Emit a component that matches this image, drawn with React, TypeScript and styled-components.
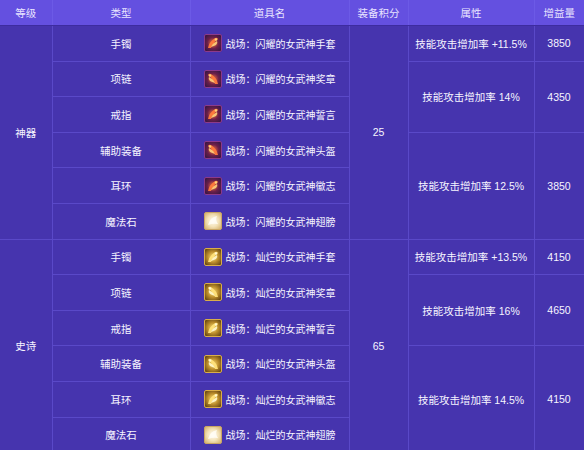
import styled, { createGlobalStyle } from 'styled-components';

const GlobalStyle = createGlobalStyle`
  html, body {
    margin: 0;
    padding: 0;
    background: #4634ae;
  }
  body {
    font-family: 'Liberation Sans', 'Noto Sans CJK SC', sans-serif;
  }
`;

type Tone = 'red' | 'gold';

type Attr = { rows: number; text: string; gain: number };

type Group = {
  grade: string;
  score: number;
  prefix: string;
  tone: Tone;
  attrs: Attr[];
};

const types = ['手镯', '项链', '戒指', '辅助装备', '耳环', '魔法石'];
const suffixes = ['手套', '奖章', '誓言', '头盔', '徽志', '翅膀'];

const groups: Group[] = [
  {
    grade: '神器',
    score: 25,
    prefix: '战场：闪耀的女武神',
    tone: 'red',
    attrs: [
      { rows: 1, text: '技能攻击增加率 +11.5%', gain: 3850 },
      { rows: 2, text: '技能攻击增加率 14%', gain: 4350 },
      { rows: 3, text: '技能攻击增加率 12.5%', gain: 3850 },
    ],
  },
  {
    grade: '史诗',
    score: 65,
    prefix: '战场：灿烂的女武神',
    tone: 'gold',
    attrs: [
      { rows: 1, text: '技能攻击增加率 +13.5%', gain: 4150 },
      { rows: 2, text: '技能攻击增加率 16%', gain: 4650 },
      { rows: 3, text: '技能攻击增加率 14.5%', gain: 4150 },
    ],
  },
];

const palette = {
  red: { frame: '#3a1744', inner: '#6b1f4a', glow: '#ff7a3c', hi: '#ffd27a', rim: '#8c3a8a' },
  gold: { frame: '#6a4a14', inner: '#b88a2a', glow: '#ffe27a', hi: '#fff8d0', rim: '#d9ad4a' },
};

// small item artwork, drawn by hand
function ItemIcon({ tone, index }: { tone: Tone; index: number }) {
  const p = palette[tone];
  const id = `g-${tone}-${index}`;
  const stone = index === 5;
  const flip = index % 2 === 1;
  return (
    <svg width='18' height='18' viewBox='0 0 18 18'>
      <defs>
        <radialGradient id={id} cx='0.5' cy='0.5' r='0.6'>
          <stop offset='0' stopColor={stone ? '#fffaf0' : p.glow} />
          <stop offset='0.55' stopColor={stone ? '#f3e2b8' : p.inner} />
          <stop offset='1' stopColor={stone ? '#d9b978' : p.frame} />
        </radialGradient>
      </defs>
      <rect x='0.5' y='0.5' width='17' height='17' rx='1.5' fill={`url(#${id})`} stroke={stone ? '#c9a564' : p.rim} />
      {stone ? (
        <path d='M4 13 Q6 5 13 4 Q11 8 14 12 Q9 11 4 13 Z' fill='#fffdf6' opacity='0.85' />
      ) : (
        <g transform={flip ? 'translate(18 0) scale(-1 1)' : undefined}>
          <path d='M4 14 Q5 8 11 4 Q13 3 14 5 Q9 8 7 14 Z' fill={p.glow} opacity='0.95' />
          <path d='M7 13 Q9 9 13 7 Q14 9 12 11 Q10 12 7 13 Z' fill={p.hi} opacity='0.9' />
          <circle cx='12' cy='5.5' r='1.3' fill={p.hi} />
        </g>
      )}
    </svg>
  );
}

export default function App() {
  return (
    <>
      <GlobalStyle />
      <Table>
        <colgroup>
          <col style={{ width: 52 }} />
          <col style={{ width: 138 }} />
          <col style={{ width: 159 }} />
          <col style={{ width: 59 }} />
          <col style={{ width: 126 }} />
          <col style={{ width: 50 }} />
        </colgroup>
        <thead>
          <tr>
            <HeadCell>等级</HeadCell>
            <HeadCell>类型</HeadCell>
            <HeadCell>道具名</HeadCell>
            <HeadCell>装备积分</HeadCell>
            <HeadCell>属性</HeadCell>
            <HeadCell>增益量</HeadCell>
          </tr>
        </thead>
        <tbody>
          {groups.map((g) => {
            const starts: Record<number, Attr> = {};
            let r = 0;
            g.attrs.forEach((a) => {
              starts[r] = a;
              r += a.rows;
            });
            return types.map((t, i) => (
              <Row key={g.grade + t}>
                {i === 0 && <Cell rowSpan={6}>{g.grade}</Cell>}
                <Cell>{t}</Cell>
                <Cell>
                  <ItemName>
                    <ItemIcon tone={g.tone} index={i} />
                    <span>
                      {g.prefix}
                      {suffixes[i]}
                    </span>
                  </ItemName>
                </Cell>
                {i === 0 && <Cell rowSpan={6}>{g.score}</Cell>}
                {starts[i] && (
                  <>
                    <Cell rowSpan={starts[i].rows}>{starts[i].text}</Cell>
                    <Cell rowSpan={starts[i].rows}>{starts[i].gain}</Cell>
                  </>
                )}
              </Row>
            ));
          })}
        </tbody>
      </Table>
    </>
  );
}

const Table = styled.table`
  width: 584px;
  table-layout: fixed;
  border-collapse: collapse;
  background: #4634ae;
  color: #f6f4ff;
`;

const HeadCell = styled.th`
  height: 25px;
  padding: 0;
  background: #6450e0;
  color: #e8e4ff;
  font-size: 10.5px;
  font-weight: normal;
  text-align: center;
  border-left: 1px solid #6c5ae6;
  border-bottom: 1px solid #3d2ca0;
  &:first-child {
    border-left: none;
  }
`;

const Row = styled.tr`
  height: 35.6px;
`;

const Cell = styled.td`
  padding: 0;
  font-size: 10.5px;
  text-align: center;
  vertical-align: middle;
  white-space: nowrap;
  border: 1px solid #5a49c8;
  &:first-child {
    border-left: none;
  }
`;

const ItemName = styled.div`
  display: flex;
  align-items: center;
  justify-content: center;
  gap: 4px;
  font-size: 10px;
  svg {
    flex: none;
  }
`;
